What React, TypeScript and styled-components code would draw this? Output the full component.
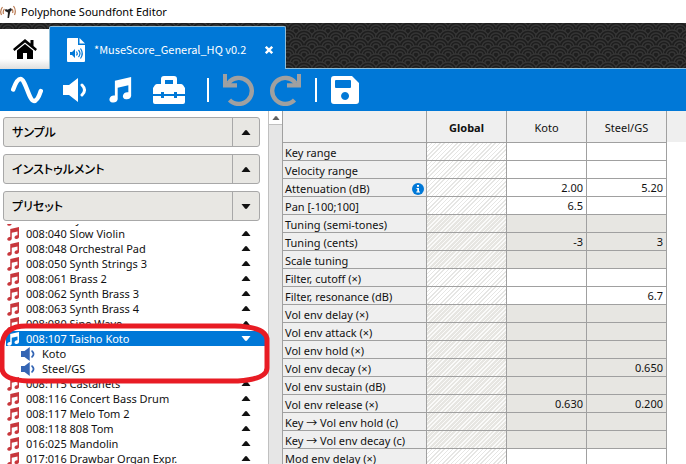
import React, { useState } from 'react';
import styled, { createGlobalStyle, css } from 'styled-components';

const BLUE = '#0078d7';
const LINE = '#a0a0a0';

const scales = encodeURIComponent(
  `<svg xmlns="http://www.w3.org/2000/svg" width="16" height="16"><rect width="16" height="16" fill="#1e1e1e"/><g fill="#1e1e1e" stroke="#353535" stroke-width="1.3">${[
    [0, 0], [16, 0], [8, 8], [0, 16], [16, 16], [8, 24],
  ]
    .map(([x, y]) => [9, 6, 3].map((r) => `<circle cx="${x}" cy="${y}" r="${r}"/>`).join(''))
    .join('')}</g></svg>`,
);

const GlobalStyle = createGlobalStyle`
  *, *::before, *::after { box-sizing: border-box; }
  body { margin: 0; background: #fff; color: #111; }
  body, button, table { font: 11px/15px "Noto Sans", "Noto Sans CJK JP", sans-serif; }
  button { color: inherit; padding: 0; border: 0; background: none; cursor: pointer; text-align: left; }
`;

const Window = styled.div`
  display: flex;
  flex-direction: column;
  height: 100vh;
  overflow: hidden;
`;

const TitleBar = styled.header`
  display: flex;
  align-items: center;
  gap: 5px;
  flex: none;
  height: 23px;
  color: #000;
  white-space: nowrap;
`;

const TabBar = styled.nav`
  display: flex;
  align-items: flex-end;
  flex: none;
  height: 46px;
  background: url("data:image/svg+xml,${scales}");
  box-shadow: inset 0 -1px #8dbcd8;
`;

const HomeTab = styled.button`
  display: grid;
  place-items: center;
  width: 49px;
  height: 40px;
  background: linear-gradient(#fff 75%, #dedede);
`;

const ActiveTab = styled.div`
  display: flex;
  align-items: center;
  height: 43px;
  padding: 3px 12px 0 17px;
  color: #fff;
  background: ${BLUE};
  border: 1px solid #8dbcd8;
  border-width: 1px 1px 0;
  border-radius: 2px 2px 0 0;
`;

const TabTitle = styled.span`
  margin: 0 19px 0 9px;
  font: 400 11px/15px "Noto Sans CJK JP", sans-serif;
  white-space: nowrap;
`;

const CloseButton = styled.button`
  display: flex;
`;

const Toolbar = styled.div`
  display: flex;
  align-items: center;
  flex: none;
  height: 42px;
  padding-left: 11px;
  gap: 14px;
  color: #fff;
  background: ${BLUE};
`;

const Tool = styled.button<{ $dim?: boolean }>`
  display: flex;
  align-items: center;
  height: 32px;
  color: ${(p) => (p.$dim ? '#a0a0a0' : '#fff')};
`;

const Divider = styled.span`
  width: 2px;
  height: 24px;
  background: #fff;
`;

const ToolGroup = styled.div`
  display: flex;
  align-items: center;
  gap: 20px;
  margin-right: 8px;
`;

const Body = styled.main`
  display: flex;
  flex: 1;
  min-height: 0;
`;

const Sidebar = styled.aside`
  position: relative;
  display: flex;
  flex-direction: column;
  flex: none;
  width: 268px;
  padding-top: 6px;
`;

const Sections = styled.div`
  display: flex;
  flex-direction: column;
  gap: 7px;
  padding: 0 8px 0 3px;
`;

const Section = styled.button`
  display: flex;
  align-items: stretch;
  height: 30px;
  background: #e8e7e3;
  border: 1px solid #a8a8a8;
  border-radius: 3px;
`;

const SectionName = styled.span`
  flex: 1;
  padding-left: 8px;
  font: 500 12px/28px "Noto Sans CJK JP", sans-serif;
  font-feature-settings: "palt";
  color: #000;
`;

const SectionArrow = styled.span`
  display: grid;
  place-items: center;
  width: 27px;
  border-left: 1px solid #a8a8a8;
`;

const Presets = styled.ul`
  display: flex;
  flex-direction: column;
  flex: 1;
  min-height: 0;
  margin: 3px 0 0;
  padding: 0 3px 0 6px;
  overflow: hidden;
  list-style: none;
`;

const PresetItem = styled.li`
  flex: none;
  &:first-child { margin-top: -13px; }
`;

const Row = styled.button<{ $selected?: boolean; $nested?: boolean }>`
  display: flex;
  align-items: center;
  width: 100%;
  height: 15px;
  padding: 0 14px 0 ${(p) => (p.$nested ? 15 : 0)}px;
  gap: ${(p) => (p.$nested ? 7 : 6)}px;
  white-space: nowrap;
  ${(p) =>
    p.$selected &&
    css`
      color: #fff;
      background: ${BLUE};
    `}
`;

const RowName = styled.span`
  flex: 1;
`;

const Highlight = styled.svg`
  position: absolute;
  top: 211px;
  left: 0;
  width: 270px;
  height: 63px;
  pointer-events: none;
`;

const ScrollTrack = styled.div`
  flex: none;
  width: 14px;
  background: #e6e6e6;
  border-left: 1px solid #c0c0c0;
`;

const ScrollUp = styled.button`
  display: grid;
  place-items: center;
  width: 100%;
  height: 14px;
  background: #fff;
  border-bottom: 1px solid #c0c0c0;
  color: #606060;
`;

const TableArea = styled.section`
  flex: 1;
  min-width: 0;
  overflow: hidden;
  border-left: 1px solid ${LINE};
  background: linear-gradient(#efefef 31px, #fff 31px);
`;

const Table = styled.table`
  border-collapse: separate;
  border-spacing: 0;
  table-layout: fixed;
  width: 384px;
`;

const HeadCell = styled.th<{ $wide?: boolean; $bold?: boolean }>`
  width: ${(p) => (p.$wide ? 144 : 80)}px;
  height: 32px;
  padding: 2px 0 0;
  font-weight: ${(p) => (p.$bold ? 700 : 400)};
  background: #efefef;
  border: solid ${LINE};
  border-width: 0 1px 1px 0;
`;

const Label = styled.th`
  height: 18px;
  padding: 2px 2px 0;
  line-height: 15px;
  font-weight: 400;
  text-align: left;
  white-space: nowrap;
  background: #efefef;
  border: solid ${LINE};
  border-width: 0 1px 1px 0;
`;

const LabelLine = styled.span`
  display: flex;
  align-items: center;
  justify-content: space-between;
`;

const Cell = styled.td<{ $shaded: boolean; $hatched?: boolean }>`
  height: 18px;
  padding: 0 3px;
  line-height: 15px;
  text-align: right;
  background: ${(p) => (p.$shaded ? '#e7e6e2' : '#fff')};
  border: solid ${LINE};
  border-width: 0 1px 1px 0;
  ${(p) =>
    p.$hatched &&
    css`
      background-image: repeating-linear-gradient(
        135deg,
        ${p.$shaded ? '#fafaf9' : '#e6e6e4'} 0 1px,
        transparent 1px 3px
      );
    `}
`;

const Arrow = ({ down, small }: { down?: boolean; small?: boolean }) => (
  <svg width={small ? 8 : 10} height={small ? 4 : 5} viewBox="0 0 10 5" fill="currentColor" aria-hidden>
    <path d={down ? 'M.5 0h9L6 4.500Q5 5.300 4 4.500Z' : 'M.5 5h9L6 .5Q5-.3 4 .5Z'} />
  </svg>
);

const Note = ({ size, color = 'currentColor' }: { size: number; color?: string }) => (
  <svg width={size} height={size} viewBox="1 0 26 28" fill={color} aria-hidden>
    <path d="M8.500 4 26 0V20.500a4.600 3.700-20 1 1-3-4V9L11.500 11.500V24a4.600 3.700-20 1 1-3-4Z" />
  </svg>
);

const Speaker = ({ size, color = 'currentColor' }: { size: number; color?: string }) => (
  <svg width={size} height={size} viewBox="0 0 24 24" fill={color} aria-hidden>
    <path d="M0 7h6L15 0v24L6 17H0Z" />
    <path d="M19 7q5 5 0 10" fill="none" stroke={color} strokeWidth="3" strokeLinecap="round" />
  </svg>
);

const AppLogo = () => (
  <svg width="16" height="16" viewBox="0 0 16 16" fill="none" aria-hidden>
    <path d="M2.500 3Q-.5 7 1.500 11M13.500 2q3 4 1 9M4.500 5Q2.500 7 3.500 10M12 5q1.500 2 .5 4" stroke="#b8764d" strokeWidth="1.200" />
    <path d="m5.500 5 5 1.500L9 14H7.500L8 8.500 5 7ZM8 5.500l3-1.500 1 2-2 2Z" fill="#222" />
  </svg>
);

const HomeIcon = () => (
  <svg width="24" height="20" viewBox="0 0 24 20" fill="#000" aria-hidden>
    <path d="M12 0 0 10l1.500 2L12 3.500 22.500 12 24 10 20.500 7V1h-3v3.500Z" />
    <path d="M12 5 4 11.500V20h6v-6h4v6h6v-8.500Z" />
  </svg>
);

const FileIcon = () => (
  <svg width="18" height="24" viewBox="0 0 18 24" aria-hidden>
    <path d="M1 0h10v7h7v16q0 1-1 1H1q-1 0-1-1V1q0-1 1-1Z" fill="#fff" />
    <path d="m12.500 0 5.500 5.500h-5.500Z" fill="#fff" />
    <path d="M3 14h2l3-3v9l-3-3H3Z" fill={BLUE} />
    <path d="M9.500 13.500q1.500 2 0 4M11.500 12q3 3.500 0 7M13.500 10.500q3.500 5 0 10" fill="none" stroke={BLUE} strokeWidth="1.200" />
  </svg>
);

const CloseIcon = () => (
  <svg width="8" height="8" viewBox="0 0 8 8" stroke="#fff" strokeWidth="2.400" aria-hidden>
    <path d="m.8.8 6.400 6.400M7.200.8.8 7.200" />
  </svg>
);

const SineIcon = () => (
  <svg width="32" height="28" viewBox="0 0 32 28" fill="none" stroke="currentColor" strokeWidth="4.400" strokeLinecap="round" aria-hidden>
    <path d="M2.200 13.500C5 5.500 7 3 9.500 3c5 0 8.500 22 13.500 22 2.500 0 4.500-3 6.800-10" />
  </svg>
);

const ToolboxIcon = () => (
  <svg width="32" height="28" viewBox="0 0 32 28" fill="currentColor" aria-hidden>
    <path
      d="M8 8V3q0-3 3-3h10q3 0 3 3v5h4q1 0 2 1l2 3v6H24v-2h-3v2H11v-2H8v2H0v-6l2-3q1-1 2-1ZM12 4v4h8V4Z"
      fillRule="evenodd"
    />
    <path d="M0 20h8v2h3v-2h10v2h3v-2h8v6q0 2-2 2H2q-2 0-2-2Z" />
  </svg>
);

const TurnIcon = ({ flip }: { flip?: boolean }) => (
  <svg width="32" height="32" viewBox="0 0 32 32" aria-hidden>
    <g transform={flip ? 'matrix(-1 0 0 1 32 0)' : undefined}>
      <path d="M5.500 9A13 13 0 1 1 6.500 26" fill="none" stroke="currentColor" strokeWidth="4.400" />
      <path d="M0 0h4v8L8 9.300h6v4.200H0Z" fill="currentColor" />
    </g>
  </svg>
);

const SaveIcon = () => (
  <svg width="28" height="28" viewBox="0 0 28 28" aria-hidden>
    <path
      d="M3 0h18l7 7v18q0 3-3 3H3q-3 0-3-3V3q0-3 3-3ZM5 4q-1 0-1 1v6q0 1 1 1h14q1 0 1-1V5q0-1-1-1ZM14 16a4 4 0 1 0 .1 0Z"
      fill="currentColor"
      fillRule="evenodd"
    />
  </svg>
);

const InfoIcon = () => (
  <svg width="12" height="12" viewBox="0 0 12 12" role="img" aria-label="Info">
    <circle cx="6" cy="6" r="6" fill={BLUE} />
    <path d="M5 2h2v1.800H5ZM4.500 5H7v3.500h1v1H4.300v-1h1V6h-.8Z" fill="#fff" />
  </svg>
);

const presets = [
  '008:038 Synth Bass',
  '008:040 Slow Violin',
  '008:048 Orchestral Pad',
  '008:050 Synth Strings 3',
  '008:061 Brass 2',
  '008:062 Synth Brass 3',
  '008:063 Synth Brass 4',
  '008:080 Sine Wave',
  '008:107 Taisho Koto',
  '008:115 Castanets',
  '008:116 Concert Bass Drum',
  '008:117 Melo Tom 2',
  '008:118 808 Tom',
  '016:025 Mandolin',
  '017:016 Drawbar Organ Expr.',
];

type Parameter = { name: string; koto?: string; steel?: string; shaded?: boolean; info?: boolean };

const parameters: Parameter[] = [
  { name: 'Key range' },
  { name: 'Velocity range' },
  { name: 'Attenuation (dB)', koto: '2.00', steel: '5.20', info: true },
  { name: 'Pan [-100;100]', koto: '6.5' },
  { name: 'Tuning (semi-tones)', shaded: true },
  { name: 'Tuning (cents)', koto: '-3', steel: '3', shaded: true },
  { name: 'Scale tuning', shaded: true },
  { name: 'Filter, cutoff (×)' },
  { name: 'Filter, resonance (dB)', steel: '6.7' },
  { name: 'Vol env delay (×)', shaded: true },
  { name: 'Vol env attack (×)', shaded: true },
  { name: 'Vol env hold (×)', shaded: true },
  { name: 'Vol env decay (×)', steel: '0.650', shaded: true },
  { name: 'Vol env sustain (dB)', shaded: true },
  { name: 'Vol env release (×)', koto: '0.630', steel: '0.200', shaded: true },
  { name: 'Key → Vol env hold (c)', shaded: true },
  { name: 'Key → Vol env decay (c)', shaded: true },
  { name: 'Mod env delay (×)' },
];

export default function App() {
  const [selected, setSelected] = useState('008:107 Taisho Koto');

  return (
    <Window>
      <GlobalStyle />
      <TitleBar>
        <AppLogo />
        Polyphone Soundfont Editor
      </TitleBar>
      <TabBar>
        <HomeTab aria-label="Home"><HomeIcon /></HomeTab>
        <ActiveTab>
          <FileIcon />
          <TabTitle>*MuseScore_General_HQ v0.2</TabTitle>
          <CloseButton aria-label="Close"><CloseIcon /></CloseButton>
        </ActiveTab>
      </TabBar>
      <Toolbar>
        <ToolGroup>
          <Tool aria-label="New sample"><SineIcon /></Tool>
          <Tool aria-label="New instrument"><Speaker size={24} /></Tool>
          <Tool aria-label="New preset"><Note size={26} /></Tool>
          <Tool aria-label="Toolbox"><ToolboxIcon /></Tool>
        </ToolGroup>
        <Divider />
        <Tool $dim aria-label="Undo"><TurnIcon /></Tool>
        <Tool $dim aria-label="Redo"><TurnIcon flip /></Tool>
        <Divider />
        <Tool aria-label="Save"><SaveIcon /></Tool>
      </Toolbar>
      <Body>
        <Sidebar>
          <Sections>
            {['サンプル', 'インストゥルメント', 'プリセット'].map((name, i) => (
              <Section key={name} aria-expanded={i === 2}>
                <SectionName>{name}</SectionName>
                <SectionArrow><Arrow down={i === 2} /></SectionArrow>
              </Section>
            ))}
          </Sections>
          <Presets>
            {presets.map((name) => {
              const isSelected = name === selected;
              const isOpen = name === '008:107 Taisho Koto';
              return (
                <PresetItem key={name}>
                  <Row $selected={isSelected} onClick={() => setSelected(name)}>
                    <Note size={14} color={isSelected ? '#fff' : '#c8373c'} />
                    <RowName>{name}</RowName>
                    <Arrow down={isOpen} />
                  </Row>
                  {isOpen &&
                    ['Koto', 'Steel/GS'].map((part) => (
                      <Row key={part} $nested>
                        <Speaker size={14} color="#3465b4" />
                        <RowName>{part}</RowName>
                      </Row>
                    ))}
                </PresetItem>
              );
            })}
          </Presets>
          <Highlight viewBox="0 0 270 63" aria-hidden>
            <path
              d="M26 4H235Q267 5 267 18V46Q267 57 238 59H28Q2 58 2 46V24Q3 4 26 4Z"
              fill="none"
              stroke="#e81c24"
              strokeWidth="5"
            />
          </Highlight>
        </Sidebar>
        <ScrollTrack>
          <ScrollUp aria-label="Scroll up"><Arrow small /></ScrollUp>
        </ScrollTrack>
        <TableArea>
          <Table>
            <thead>
              <tr>
                <HeadCell $wide aria-label="Parameter" />
                <HeadCell $bold scope="col">Global</HeadCell>
                <HeadCell scope="col">Koto</HeadCell>
                <HeadCell scope="col">Steel/GS</HeadCell>
              </tr>
            </thead>
            <tbody>
              {parameters.map(({ name, koto, steel, shaded = false, info }) => (
                <tr key={name}>
                  <Label scope="row">
                    <LabelLine>
                      {name}
                      {info && <InfoIcon />}
                    </LabelLine>
                  </Label>
                  <Cell $shaded={shaded} $hatched />
                  <Cell $shaded={shaded}>{koto}</Cell>
                  <Cell $shaded={shaded}>{steel}</Cell>
                </tr>
              ))}
            </tbody>
          </Table>
        </TableArea>
      </Body>
    </Window>
  );
}
